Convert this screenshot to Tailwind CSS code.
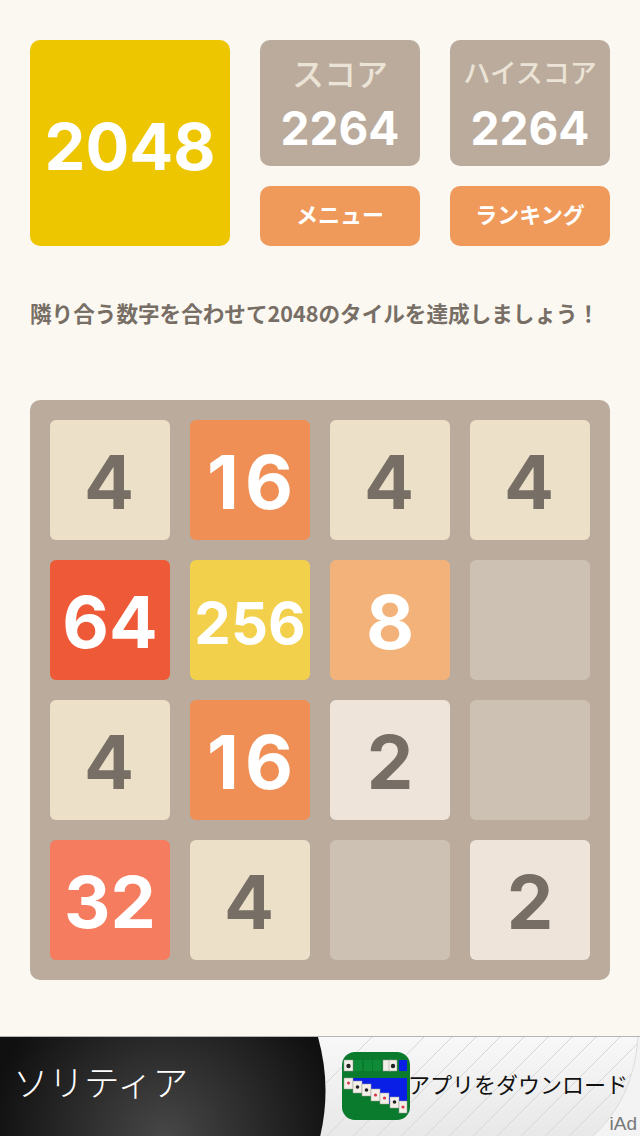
<!DOCTYPE html>
<html lang="ja">
  <head>
    <meta charset="UTF-8" />
    <title>2048</title>
    <script src="https://cdn.jsdelivr.net/npm/@tailwindcss/browser@4"></script>
  </head>
  <body class="w-[640px] h-[1136px] overflow-hidden bg-[#fbf8f1] font-['Noto_Sans_CJK_JP',sans-serif] flex flex-col">
    <div class="flex gap-[30px] pl-[30px] pt-[40px]">
      <div class="w-[200px] h-[206px] rounded-[10px] bg-[#edc600] flex items-center justify-center pt-[6px] text-[65px] leading-none font-bold text-white font-['Inter',sans-serif]">2048</div>
      <div class="grid grid-cols-[160px_160px] grid-rows-[126px_60px] gap-x-[30px] gap-y-[20px]">
        <div class="rounded-[10px] bg-[#baab9d] flex flex-col items-center pt-[13px]">
          <div class="text-[32px] leading-[38px] font-medium text-[#ebe3d5]">スコア</div>
          <div class="mt-[11px] text-[46px] leading-[52px] font-bold text-white font-['Inter',sans-serif]">2264</div>
        </div>
        <div class="rounded-[10px] bg-[#baab9d] flex flex-col items-center pt-[13px]">
          <div class="text-[27px] leading-[38px] font-medium text-[#ebe3d5]">ハイスコア</div>
          <div class="mt-[11px] text-[46px] leading-[52px] font-bold text-white font-['Inter',sans-serif]">2264</div>
        </div>
        <div class="rounded-[10px] bg-[#ef9a5b] flex items-center justify-center pb-[6px] text-[22px] font-bold text-white">メニュー</div>
        <div class="rounded-[10px] bg-[#ef9a5b] flex items-center justify-center pb-[6px] text-[22px] font-bold text-white">ランキング</div>
      </div>
    </div>

    <p class="mt-[51px] pl-[30px] text-[21.6px] leading-[32px] font-bold text-[#776e65] whitespace-nowrap">隣り合う数字を合わせて2048のタイルを達成しましょう！</p>

    <div class="mt-[71px] ml-[30px] w-[580px] h-[580px] rounded-[10px] bg-[#baab9d] p-[20px] grid grid-cols-[repeat(4,120px)] grid-rows-[repeat(4,120px)] gap-[20px] font-['Inter',sans-serif] font-bold">
      <div class="rounded-[6px] bg-[#ede0c8] text-[#776e65] text-[74px] pt-[4px] pr-[2px] flex items-center justify-center">4</div>
      <div class="rounded-[6px] bg-[#ef8f55] text-white text-[74px] pt-[4px] pl-[6px] tracking-[6px] flex items-center justify-center">16</div>
      <div class="rounded-[6px] bg-[#ede0c8] text-[#776e65] text-[74px] pt-[4px] pr-[2px] flex items-center justify-center">4</div>
      <div class="rounded-[6px] bg-[#ede0c8] text-[#776e65] text-[74px] pt-[4px] pr-[2px] flex items-center justify-center">4</div>

      <div class="rounded-[6px] bg-[#ee5a38] text-white text-[72px] pt-[4px] flex items-center justify-center">64</div>
      <div class="rounded-[6px] bg-[#f2d04b] text-white text-[58px] pt-[6px] flex items-center justify-center">256</div>
      <div class="rounded-[6px] bg-[#f3b27a] text-white text-[74px] pt-[4px] flex items-center justify-center">8</div>
      <div class="rounded-[6px] bg-[#cdc1b4]"></div>

      <div class="rounded-[6px] bg-[#ede0c8] text-[#776e65] text-[74px] pt-[4px] pr-[2px] flex items-center justify-center">4</div>
      <div class="rounded-[6px] bg-[#ef8f55] text-white text-[74px] pt-[4px] pl-[6px] tracking-[6px] flex items-center justify-center">16</div>
      <div class="rounded-[6px] bg-[#eee4da] text-[#776e65] text-[74px] pt-[4px] flex items-center justify-center">2</div>
      <div class="rounded-[6px] bg-[#cdc1b4]"></div>

      <div class="rounded-[6px] bg-[#f67c5f] text-white text-[72px] pt-[4px] flex items-center justify-center">32</div>
      <div class="rounded-[6px] bg-[#ede0c8] text-[#776e65] text-[74px] pt-[4px] pr-[2px] flex items-center justify-center">4</div>
      <div class="rounded-[6px] bg-[#cdc1b4]"></div>
      <div class="rounded-[6px] bg-[#eee4da] text-[#776e65] text-[74px] pt-[4px] flex items-center justify-center">2</div>
    </div>

    <!-- ad banner -->
    <div class="relative mt-[56px] h-[100px] w-[640px] overflow-hidden border-t border-[#b5b5b5] bg-gradient-to-b from-[#f8f8f8] to-[#e8e8e8]">
      <svg class="absolute inset-0" width="640" height="100" viewBox="0 0 640 100">
        <defs>
          <radialGradient id="blackGrad" cx="165" cy="100" r="175" gradientUnits="userSpaceOnUse">
            <stop offset="0" stop-color="#474747" />
            <stop offset="1" stop-color="#101010" />
          </radialGradient>
        </defs>
        <g stroke="#d6d6d6" stroke-width="1">
          <path d="M322 50L372 0M326 100L424 0M352 100L452 0M376 100L476 0M400 100L500 0M424 100L524 0M448 100L548 0M472 100L572 0M496 100L596 0M520 100L620 0M544 100L640 4M568 100L640 28" />
        </g>
        <path d="M638 0Q634 62 592 100H640V0Z" fill="#f3f3f3" />
        <path d="M638 0Q634 62 592 100" fill="none" stroke="#dcdcdc" />
        <path d="M0 0H318Q332 50 320 100H0Z" fill="url(#blackGrad)" />
      </svg>
      <div class="absolute left-[13px] top-[19px] text-[35.5px] leading-[50px] font-light text-white">ソリティア</div>

      <svg class="absolute left-[342px] top-[15px]" width="68" height="68" viewBox="0 0 68 68">
        <defs>
          <clipPath id="iconClip"><rect width="68" height="68" rx="13" /></clipPath>
        </defs>
        <g clip-path="url(#iconClip)">
          <rect width="68" height="68" fill="#0a7a2c" />
          <rect x="57" y="8" width="8" height="11" fill="#0a1fe6" />
          <path d="M11 26H65V61H57V56H48V52H38V49H29V44H20V41H11Z" fill="#0a1fe6" />
          <g fill="#0f8a36">
            <rect x="12" y="8" width="8" height="11" />
            <rect x="22" y="8" width="8" height="11" />
            <rect x="31" y="8" width="8" height="11" />
          </g>
          <g fill="#f3efe8" stroke="#9a9a9a" stroke-width="0.5">
            <rect x="2" y="8" width="9" height="11" />
            <rect x="41" y="8" width="8" height="11" />
            <rect x="47" y="8" width="8" height="11" />
            <rect x="2" y="26" width="9" height="11" />
            <rect x="11" y="29" width="9" height="12" />
            <rect x="20" y="32" width="9" height="12" />
            <rect x="29" y="37" width="9" height="12" />
            <rect x="38" y="41" width="9" height="11" />
            <rect x="48" y="45" width="9" height="11" />
            <rect x="57" y="49" width="8" height="12" />
          </g>
          <g fill="#222">
            <circle cx="6.5" cy="14" r="2.2" />
            <circle cx="51" cy="14" r="2.2" />
            <circle cx="15.5" cy="35" r="1.8" />
            <circle cx="24.5" cy="38" r="1.8" />
            <circle cx="52.5" cy="50" r="1.8" />
          </g>
          <g fill="#d8364a">
            <circle cx="6.5" cy="31" r="1.5" />
            <circle cx="33.5" cy="43" r="1.6" />
            <circle cx="42.5" cy="46" r="1.6" />
            <circle cx="61" cy="55" r="1.6" />
          </g>
        </g>
      </svg>
      <div class="absolute left-[408px] top-[30px] text-[22px] leading-[32px] font-normal text-[#111] whitespace-nowrap">アプリをダウンロード</div>
      <div class="absolute right-[3px] bottom-[1px] font-['Liberation_Sans',sans-serif] text-[19px] leading-[22px] text-[#777]">iAd</div>
    </div>
  </body>
</html>
